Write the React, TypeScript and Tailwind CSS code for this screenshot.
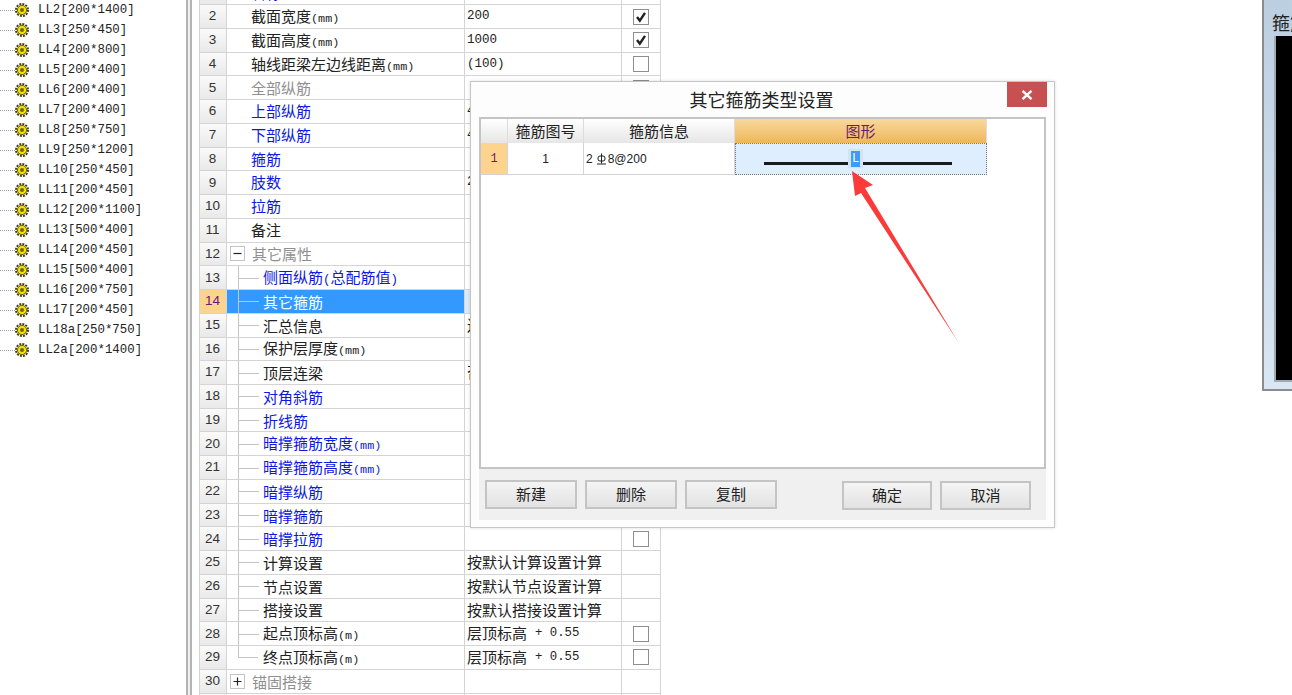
const cjk = '"Noto Sans CJK SC", sans-serif';

const treeItems = [
  "LL2[200*1400]", "LL3[250*450]", "LL4[200*800]", "LL5[200*400]", "LL6[200*400]", "LL7[200*400]",
  "LL8[250*750]", "LL9[250*1200]", "LL10[250*450]", "LL11[200*450]", "LL12[200*1100]", "LL13[500*400]",
  "LL14[200*450]", "LL15[500*400]", "LL16[200*750]", "LL17[200*450]", "LL18a[250*750]", "LL2a[200*1400]",
];

type Row = {
  name: string;
  unit?: string;
  value?: string;
  suffix?: string;
  check?: boolean;
  tone?: "blue" | "gray";
  tree?: "mid" | "end";
  group?: "-" | "+";
  selected?: boolean;
};

const rows: Row[] = [
  { name: "名称", tone: "blue", value: "LL1" },
  { name: "截面宽度", unit: "(mm)", value: "200", check: true },
  { name: "截面高度", unit: "(mm)", value: "1000", check: true },
  { name: "轴线距梁左边线距离", unit: "(mm)", value: "(100)", check: false },
  { name: "全部纵筋", tone: "gray", check: false },
  { name: "上部纵筋", tone: "blue", value: "4" },
  { name: "下部纵筋", tone: "blue", value: "4" },
  { name: "箍筋", tone: "blue" },
  { name: "肢数", tone: "blue", value: "2" },
  { name: "拉筋", tone: "blue" },
  { name: "备注" },
  { name: "其它属性", tone: "gray", group: "-" },
  { name: "侧面纵筋", unit: "(总配筋值)", tone: "blue", tree: "mid" },
  { name: "其它箍筋", tone: "blue", tree: "mid", selected: true },
  { name: "汇总信息", value: "连", tree: "mid" },
  { name: "保护层厚度", unit: "(mm)", tree: "mid" },
  { name: "顶层连梁", value: "否", tree: "mid" },
  { name: "对角斜筋", tone: "blue", tree: "mid" },
  { name: "折线筋", tone: "blue", tree: "mid" },
  { name: "暗撑箍筋宽度", unit: "(mm)", tone: "blue", tree: "mid" },
  { name: "暗撑箍筋高度", unit: "(mm)", tone: "blue", tree: "mid" },
  { name: "暗撑纵筋", tone: "blue", tree: "mid" },
  { name: "暗撑箍筋", tone: "blue", tree: "mid" },
  { name: "暗撑拉筋", tone: "blue", tree: "mid", check: false },
  { name: "计算设置", value: "按默认计算设置计算", tree: "mid" },
  { name: "节点设置", value: "按默认节点设置计算", tree: "mid" },
  { name: "搭接设置", value: "按默认搭接设置计算", tree: "mid" },
  { name: "起点顶标高", unit: "(m)", value: "层顶标高", suffix: "+ 0.55", tree: "mid", check: false },
  { name: "终点顶标高", unit: "(m)", value: "层顶标高", suffix: "+ 0.55", tree: "end", check: false },
  { name: "锚固搭接", tone: "gray", group: "+" },
  { name: "" },
];

function GearIcon() {
  return (
    <svg width="14" height="14" viewBox="0 0 14 14" className="shrink-0">
      <circle cx="7" cy="7" r="6" fill="none" stroke="#4a4008" strokeWidth="2" strokeDasharray="2 1.1" />
      <circle cx="7" cy="7" r="4.6" fill="#f2e400" stroke="#4a4008" strokeWidth="0.8" />
      <circle cx="7" cy="7" r="2" fill="#6f6418" />
    </svg>
  );
}

function TreePanel() {
  return (
    <div className="w-[186px] shrink-0 overflow-hidden bg-white">
      {treeItems.map((label) => (
        <div key={label} className="flex h-5 items-center">
          <span className="w-[15px] shrink-0 border-b border-dotted border-[#a0a0a0]" />
          <GearIcon />
          <span className="ml-[2px] pl-[7px] font-['Liberation_Mono',monospace] text-[12.4px] leading-none text-[#222]">
            {label}
          </span>
        </div>
      ))}
    </div>
  );
}

function CheckBox({ checked }: { checked: boolean }) {
  return (
    <span className="flex h-4 w-4 items-center justify-center border border-[#8e8e8e] bg-white">
      {checked ? (
        <svg width="12" height="12" viewBox="0 0 12 12">
          <path d="M2 6 L4.8 9.6 L10 1.8" fill="none" stroke="#222" strokeWidth="2.4" />
        </svg>
      ) : null}
    </span>
  );
}

function TreeLines({ kind }: { kind: "mid" | "end" }) {
  return (
    <span className={`relative h-full w-[25px] shrink-0 ${kind === "end" ? "" : "border-l border-[#c4c4c4]"}`}>
      {kind === "end" ? <span className="absolute left-0 top-0 h-1/2 border-l border-[#c4c4c4]" /> : null}
      <span className="absolute left-0 top-1/2 w-5 border-t border-[#c4c4c4]" />
    </span>
  );
}

function GroupBox({ kind }: { kind: "-" | "+" }) {
  return (
    <svg width="15" height="15" viewBox="0 0 15 15" className="mr-[7px] shrink-0">
      <rect x="0.5" y="0.5" width="14" height="14" fill="#fff" stroke="#c4c4c4" />
      <path d={kind === "-" ? "M3.5 7.5 H11.5" : "M3.5 7.5 H11.5 M7.5 3.5 V11.5"} stroke="#222" strokeWidth="1.2" />
    </svg>
  );
}

function Label({ row }: { row: Row }) {
  const mono = "font-['Liberation_Mono',monospace]";
  return (
    <span className="whitespace-nowrap leading-none">
      {row.name}
      {row.unit && row.unit.includes("总") ? (
        <>
          <span className={`${mono} text-[12.5px]`}>(</span>
          {row.unit.slice(1, -1)}
          <span className={`${mono} text-[12.5px]`}>)</span>
        </>
      ) : row.unit ? (
        <span className={`${mono} text-[11.8px]`}>{row.unit}</span>
      ) : null}
    </span>
  );
}

function PropRow({ row, index }: { row: Row; index: number }) {
  const toneClass = row.selected
    ? "text-white"
    : row.tone === "blue"
      ? "text-[#0b18e0]"
      : row.tone === "gray"
        ? "text-[#8f8f8f]"
        : "text-[#222]";
  return (
    <div className="flex h-[23.74px] border-b border-[#d4d4d4]">
      <div
        className={`flex w-[27px] shrink-0 items-center justify-center border-r border-[#d4d4d4] pr-[1px] font-['Liberation_Sans',sans-serif] text-[13.5px] ${
          row.selected ? "bg-[#fdd48e] text-[#6d1a6d]" : "bg-gradient-to-b from-[#fafafa] to-[#e9e9e9] text-[#333]"
        }`}
      >
        {index + 1}
      </div>
      <div className={`flex w-[238px] shrink-0 items-center border-r border-[#d4d4d4] text-[15px] ${toneClass} ${row.selected ? "bg-[#3399ff]" : ""}`}>
        {row.tree ? (
          <span className="ml-[11px] flex h-full items-center">
            <TreeLines kind={row.tree} />
            <Label row={row} />
          </span>
        ) : row.group ? (
          <span className="ml-[3px] flex items-center">
            <GroupBox kind={row.group} />
            <Label row={row} />
          </span>
        ) : (
          <span className="ml-[24px]">
            <Label row={row} />
          </span>
        )}
      </div>
      <div className={`flex w-[157px] shrink-0 items-center whitespace-nowrap border-r border-[#d4d4d4] pl-[2px] text-[15px] text-[#222] ${row.selected ? "bg-[#dceaf8]" : ""}`}>
        {row.value && /^[\x00-\x7f]+$/.test(row.value) ? (
          <span className="font-['Liberation_Mono',monospace] text-[12.5px]">{row.value}</span>
        ) : (
          row.value
        )}
        {row.suffix ? <span className="ml-[8px] font-['Liberation_Mono',monospace] text-[12.3px]">{row.suffix}</span> : null}
      </div>
      <div className="flex w-[39px] shrink-0 items-center justify-center border-r border-[#d4d4d4]">
        {row.check !== undefined ? <CheckBox checked={row.check} /> : null}
      </div>
    </div>
  );
}

function PropGrid() {
  return (
    <div className="ml-[7px] w-[462px] shrink-0 overflow-hidden border-l border-[#d4d4d4]">
      <div className="mt-[-18.5px]">
        {rows.map((row, i) => (
          <PropRow key={i} row={row} index={i} />
        ))}
      </div>
    </div>
  );
}

function DlgButton({ label, className }: { label: string; className: string }) {
  return (
    <button className={`h-[29px] border-2 border-[#c4c4c4] bg-gradient-to-b from-[#f4f4f4] to-[#e2e2e2] text-[15px] text-[#222] ${className}`}>
      {label}
    </button>
  );
}

function RebarSymbol() {
  return (
    <svg width="11" height="12" viewBox="0 0 11 12" className="ml-[3px] mr-[1px] shrink-0">
      <path d="M5.5 0.5 V10.5 M1 11 H10" stroke="#222" strokeWidth="1" fill="none" />
      <rect x="2" y="3" width="7" height="5" rx="2" fill="none" stroke="#222" strokeWidth="1" />
    </svg>
  );
}

function StirrupDialog() {
  return (
    <div className="absolute left-[470px] top-[81px] flex h-[447px] w-[585px] flex-col border border-[#c6c6c6] bg-[#fdfdfd] shadow-[0_0_3px_rgba(0,0,0,0.15)]">
      <div className="flex h-[35px] shrink-0 items-start">
        <div className="flex-1 pl-[45px] pt-[4px] text-center text-[18px] leading-[27px] text-[#222]">其它箍筋类型设置</div>
        <button className="mr-[7px] flex h-[25px] w-[40px] items-center justify-center bg-[#c75050]">
          <svg width="12" height="10" viewBox="0 0 12 10">
            <path d="M1.5 0.8 L10.5 9.2 M10.5 0.8 L1.5 9.2" stroke="#fff" strokeWidth="2.4" />
          </svg>
        </button>
      </div>
      <div className="mx-[8px] flex h-[352px] shrink-0 flex-col border-2 border-[#c4c4c4] bg-white">
        <div className="flex h-[24px]">
          <div className="w-[27px] border-r border-[#dcdcdc] bg-gradient-to-b from-[#ffffff] to-[#e6e6e6]" />
          <div className="flex w-[76px] items-center justify-center border-r border-[#dcdcdc] bg-gradient-to-b from-[#ffffff] to-[#e6e6e6] text-[15px] text-[#222]">
            箍筋图号
          </div>
          <div className="flex w-[151px] items-center justify-center border-r border-[#dcdcdc] bg-gradient-to-b from-[#ffffff] to-[#e6e6e6] text-[15px] text-[#222]">
            箍筋信息
          </div>
          <div className="flex w-[252px] items-center justify-center border-r border-[#dcdcdc] bg-gradient-to-b from-[#f8d99c] to-[#efb65a] text-[15px] text-[#6d1a6d]">
            图形
          </div>
        </div>
        <div className="flex h-[32px]">
          <div className="flex w-[27px] items-center justify-center border-b border-r border-[#d4d4d4] bg-[#fdd48e] font-['Liberation_Mono',monospace] text-[12px] text-[#6d1a6d]">
            1
          </div>
          <div className="flex w-[76px] items-center justify-center border-b border-r border-[#d4d4d4] font-['Liberation_Sans',sans-serif] text-[12px] text-[#222]">
            1
          </div>
          <div className="flex w-[151px] items-center border-b border-r border-[#d4d4d4] pl-[2px] font-['Liberation_Sans',sans-serif] text-[12px] text-[#222]">
            2
            <RebarSymbol />
            8@200
          </div>
          <div className="flex w-[252px] items-center border border-dotted border-[#777] bg-[#deeeff] pl-[28px]">
            <span className="mt-[9px] h-[3px] w-[84px] bg-[#1a1a1a]" />
            <span className="mb-[1px] flex h-[19px] w-[15px] items-center justify-center bg-[#d3e3f2]">
              <span className="flex h-[16px] w-[9px] items-center justify-center bg-[#3f9bf5] font-['Liberation_Mono',monospace] text-[12px] leading-none text-white">
                L
              </span>
            </span>
            <span className="mt-[9px] h-[3px] w-[89px] bg-[#1a1a1a]" />
          </div>
        </div>
      </div>
      <div className="mx-[8px] flex h-[51px] shrink-0 items-start bg-[#f0f0f0] pl-[6px] pr-[15px] pt-[11px]">
        <DlgButton label="新建" className="w-[92px]" />
        <DlgButton label="删除" className="ml-[8px] w-[92px]" />
        <DlgButton label="复制" className="ml-[8px] w-[92px]" />
        <DlgButton label="确定" className="ml-auto mt-[1px] w-[90px]" />
        <DlgButton label="取消" className="ml-[8px] mt-[1px] w-[91px]" />
      </div>
    </div>
  );
}

function Arrow() {
  return (
    <svg className="pointer-events-none absolute left-[840px] top-[165px]" width="130" height="190" viewBox="0 0 130 190">
      <polygon points="12,6 15,31 21,28 118.5,177.5 25,23 33,20" fill="#fb3a3a" />
    </svg>
  );
}

function SidePanel() {
  return (
    <div className="ml-auto flex h-[391px] w-[30px] shrink-0 flex-col overflow-hidden border-b-2 border-l-2 border-[#8c8c8c] bg-gradient-to-b from-[#bccfe1] to-[#d9e6f3] pl-[10px]">
      <div className="ml-[-2px] h-[36px] shrink-0 whitespace-nowrap pt-[9px] text-[18px] leading-[26px] text-[#222]">箍筋</div>
      <div className="mb-[7px] flex-1 border-b-2 border-l-2 border-[#a0aab4] bg-black" />
    </div>
  );
}

export default function App() {
  return (
    <div className="relative flex h-[695px] w-[1292px] overflow-hidden bg-white" style={{ fontFamily: cjk }}>
      <TreePanel />
      <div className="h-full w-[6px] shrink-0 border-x-2 border-[#b4b4b4] bg-[#f0f0f0]" />
      <PropGrid />
      <SidePanel />
      <StirrupDialog />
      <Arrow />
    </div>
  );
}
